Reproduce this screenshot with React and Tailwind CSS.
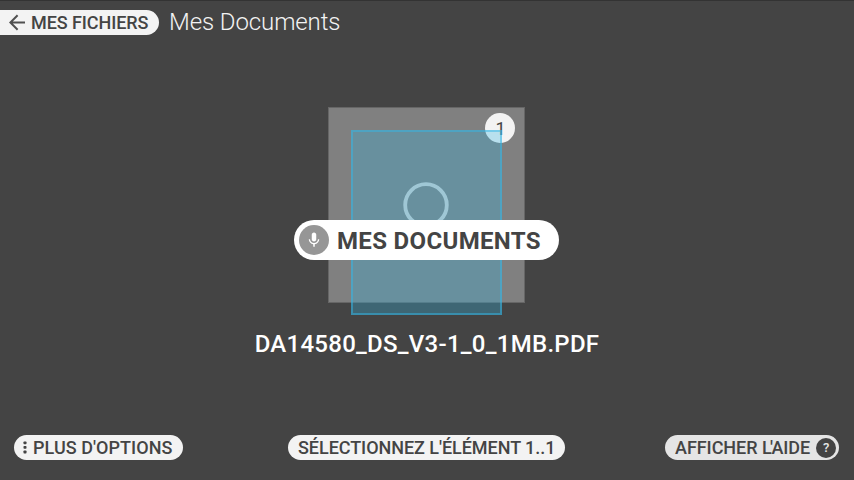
function Pill({ className = "", children }) {
  return (
    <div className={`flex h-[25px] shrink-0 items-center text-[18px] leading-[25px] font-medium whitespace-nowrap text-[#444] ${className}`}>
      {children}
    </div>
  );
}

function BackIcon() {
  return (
    <svg className="mr-[5px] h-[17px] w-[17px] shrink-0" viewBox="0 0 17 17" fill="none" stroke="#505050" strokeWidth="2">
      <path d="M16 8.5H1.8M8.6 1.3L1.4 8.5l7.2 7.2" />
    </svg>
  );
}

function MoreIcon() {
  return (
    <svg className="mr-[6px] h-[13px] w-[4px] shrink-0" viewBox="0 0 4 13" fill="#444">
      <rect x="0.5" y="0.5" width="3" height="2.8" rx="0.7" />
      <rect x="0.5" y="5" width="3" height="2.8" rx="0.7" />
      <rect x="0.5" y="9.6" width="3" height="2.8" rx="0.7" />
    </svg>
  );
}

function MicIcon() {
  return (
    <svg className="h-[18px] w-[18px]" viewBox="0 0 24 24" fill="#fff">
      <path d="M12 14c1.66 0 2.99-1.34 2.99-3L15 5c0-1.66-1.34-3-3-3S9 3.34 9 5v6c0 1.66 1.34 3 3 3zm5.3-3c0 3-2.54 5.1-5.3 5.1S6.7 14 6.7 11H5c0 3.41 2.72 6.23 6 6.72V21h2v-3.28c3.28-.48 6-3.3 6-6.72h-1.7z" />
    </svg>
  );
}

function DocumentTile() {
  return (
    <div className="relative ml-[328px] h-[196px] w-[197px] border border-[#666] bg-[#808080]">
      <div className="absolute top-[5px] right-[9px] flex h-[30px] w-[30px] justify-center rounded-full bg-[#f3f3f3] pl-px text-[18px] leading-[31px] text-[#444]">
        1
      </div>
      <svg className="absolute top-[74px] left-[74px] h-[46px] w-[46px]" viewBox="0 0 46 46" fill="none">
        <circle cx="23" cy="23" r="20.8" stroke="#cfcfcf" strokeWidth="3.8" />
      </svg>
      <div className="absolute top-[22px] left-[22px] h-[185px] w-[151px] border-2 border-[#33b5e5]/50 bg-[#33b5e5]/30" />
      <div className="absolute top-[112px] left-[-35px] flex h-[40px] w-[265px] items-center rounded-full bg-white pl-[5px] text-[24px] leading-[40px] font-bold tracking-[0.34px] whitespace-nowrap text-[#444]">
        <span className="mr-[8px] flex h-[30px] w-[30px] shrink-0 items-center justify-center rounded-full bg-[#969696]">
          <MicIcon />
        </span>
        <span className="pt-[2px] leading-[38px]">MES DOCUMENTS</span>
      </div>
    </div>
  );
}

export default function App() {
  return (
    <div className="flex h-[480px] w-[854px] flex-col overflow-hidden bg-[#444] font-['Roboto',sans-serif]">
      <div className="h-px shrink-0 bg-[#333]" />
      <header className="mt-[9px] flex h-[25px] shrink-0 items-center">
        <Pill className="w-[159px] rounded-r-full bg-[#f3f3f3] pl-[9px] tracking-[-0.08px]">
          <BackIcon />
          MES FICHIERS
        </Pill>
        <h1 className="ml-[10px] text-[24px] leading-[25px] font-light tracking-[-0.1px] text-[#f3f3f3]">Mes Documents</h1>
      </header>
      <main className="flex flex-1 flex-col pt-[72px]">
        <DocumentTile />
        <div className="mt-[26px] text-center text-[24px] leading-[30px] font-medium tracking-[0.27px] text-white">DA14580_DS_V3-1_0_1MB.PDF</div>
      </main>
      <footer className="flex h-[45px] shrink-0 items-start">
        <Pill className="ml-[14px] w-[169px] rounded-full bg-[#f3f3f3] pl-[9px] tracking-[0.05px]">
          <MoreIcon />
          PLUS D'OPTIONS
        </Pill>
        <Pill className="ml-[105px] w-[277px] rounded-full bg-[#f3f3f3] pl-[10px] tracking-[-0.05px]">SÉLECTIONNEZ L'ÉLÉMENT 1..1</Pill>
        <Pill className="ml-[100px] w-[174px] rounded-full bg-[#e5e5e5] pl-[10px]">
          <span className="tracking-[-0.05px]">
            AFFICHER L<span className="ml-[-1.7px] tracking-[-1.5px]">'</span>AIDE
          </span>
          <span className="ml-[6px] flex h-[20px] w-[20px] shrink-0 items-center justify-center rounded-full bg-[#444] text-[13px] leading-[20px] text-[#e5e5e5]">?</span>
        </Pill>
      </footer>
    </div>
  );
}
